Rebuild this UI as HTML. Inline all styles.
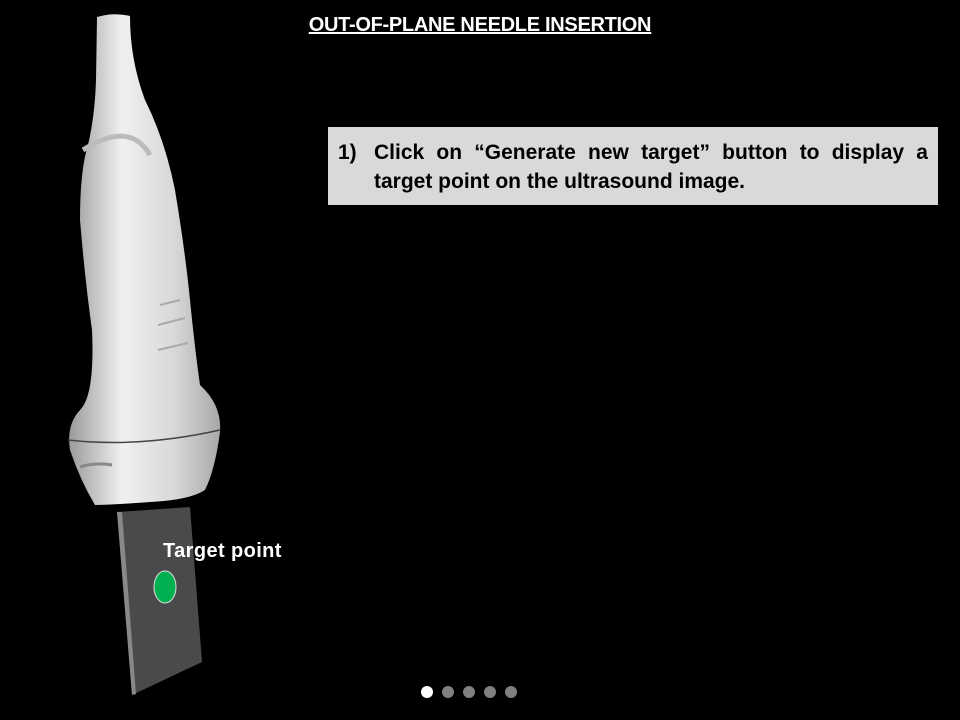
<!DOCTYPE html>
<html><head><style>
body{margin:0;width:960px;height:720px;background:#000;overflow:hidden;position:relative;font-family:"Liberation Sans",Arial,sans-serif}
.t{position:absolute;top:14px;left:0;width:960px;text-align:center;color:#fff;font-weight:bold;font-size:20px;letter-spacing:-0.3px}
.t span{text-decoration:underline}
.box{position:absolute;left:328px;top:127px;width:610px;height:78px;background:#d9d9d9;box-sizing:border-box;padding:11px 10px 0 10px;font-weight:bold;font-size:21px;line-height:29px;color:#000;letter-spacing:0}
.box .n{position:absolute;left:10px;top:11px}
.box .x{margin-left:36px}
.box .l1{text-align:justify;text-align-last:justify}
.lab{position:absolute;left:163px;top:540px;color:#fff;font-weight:bold;font-size:20px;letter-spacing:0.4px}
.dots{position:absolute;left:421px;top:686px}
.dots i{float:left;width:12px;height:12px;border-radius:50%;background:#808080;margin-right:9px}
.dots i:first-child{background:#fff}
</style></head><body>
<div class="t"><span>OUT-OF-PLANE NEEDLE INSERTION</span></div>
<svg width="960" height="720" style="position:absolute;left:0;top:0">
<defs>
<linearGradient id="g" x1="0" x2="1" y1="0" y2="0">
<stop offset="0" stop-color="#9a9a9a"/><stop offset="0.35" stop-color="#f0f0f0"/><stop offset="0.7" stop-color="#d8d8d8"/><stop offset="1" stop-color="#a8a8a8"/></linearGradient>
</defs>
<polygon points="117,512 190,507 202,662 132,695" fill="#4a4a4a"/>
<polygon points="117,512 122,512 136,694 132,695" fill="#888"/>
<path d="M97,17 Q113,12 130,16 Q130,60 145,100 Q165,140 175,190 Q185,250 190,300 Q195,350 200,385 Q222,405 220,432 Q215,470 205,490 Q190,500 150,502 Q110,505 95,505 Q80,480 70,450 Q66,425 80,410 Q95,395 92,330 Q85,280 80,220 Q80,170 88,145 Q95,115 96,80 Z" fill="url(#g)"/>
<path d="M68,440 Q140,448 220,430" stroke="#444" stroke-width="1.5" fill="none"/>
<path d="M83,150 Q130,120 150,155" stroke="#bbb" stroke-width="5" fill="none"/>
<path d="M80,467 Q95,462 112,465" stroke="#888" stroke-width="3" fill="none"/>
<path d="M160,305 L180,300 M158,325 L185,318 M158,350 L188,343" stroke="#aaa" stroke-width="2" fill="none"/>
<ellipse cx="165" cy="587" rx="11" ry="16" fill="#00b050" stroke="#ddd" stroke-width="1"/>
</svg>
<div class="box"><div class="n">1)</div><div class="x"><div class="l1">Click on “Generate new target” button to display a</div><div>target point on the ultrasound image.</div></div></div>
<div class="lab">Target point</div>
<div class="dots"><i></i><i></i><i></i><i></i><i></i></div>
</body></html>
